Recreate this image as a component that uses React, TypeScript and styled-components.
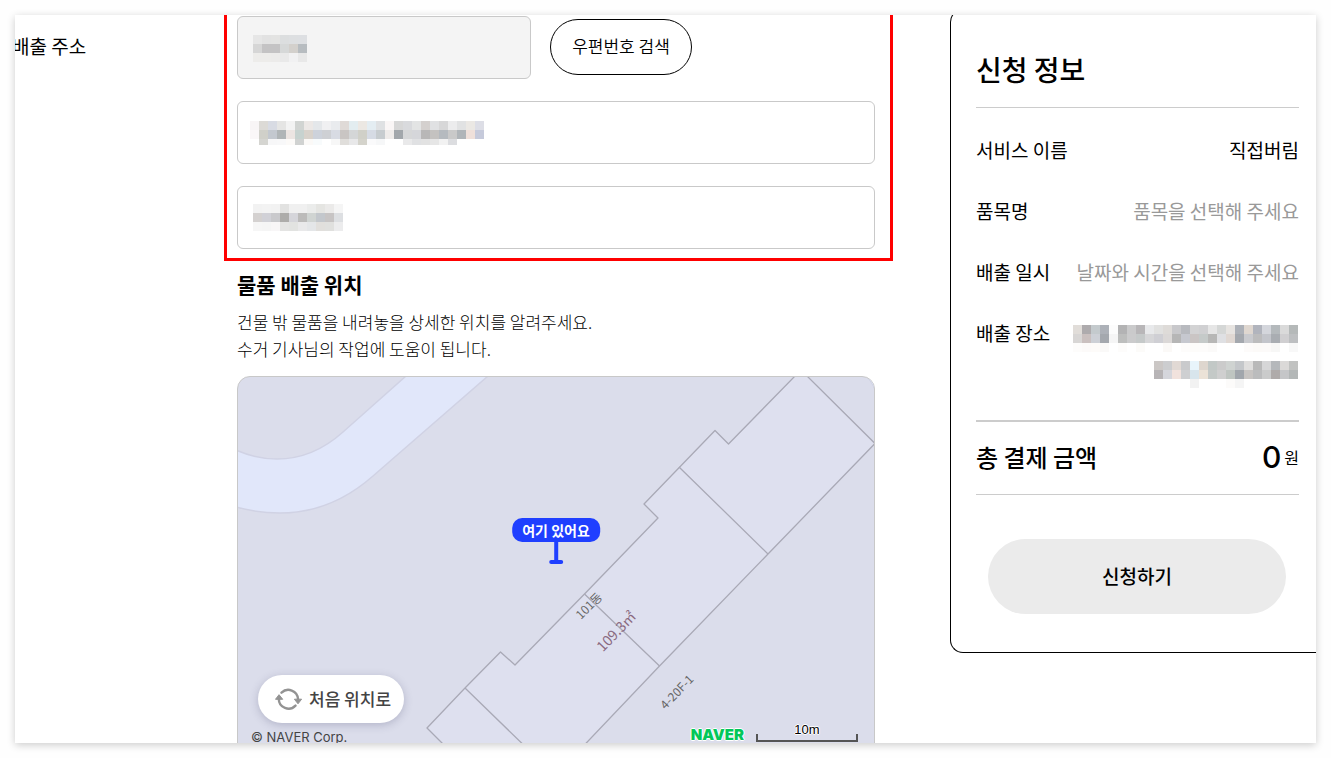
import React from "react";
import styled, { createGlobalStyle } from "styled-components";

const GlobalStyle = createGlobalStyle`
  *, *::before, *::after { box-sizing: border-box; }
  body {
    margin: 0;
    background: #fefefe;
    color: #000;
    font-family: "Noto Sans CJK KR", "Noto Sans", sans-serif;
    font-size: 19px;
    line-height: 28px;
  }
  h2, h3, p, dl, dt, dd { margin: 0; }
  button, input { font-family: inherit; color: inherit; }
`;

const Page = styled.div`
  height: 100vh;
  padding: 15px;
`;

const Sheet = styled.main`
  display: grid;
  grid-template-columns: 209px minmax(0, 1fr) 366px;
  column-gap: 57px;
  align-items: start;
  height: 100%;
  overflow: hidden;
  background: #fff;
`;

const Shadow = styled.div`
  height: calc(100vh - 30px);
  box-shadow: 0 2px 8px rgba(0, 0, 0, 0.2);
`;

const FormLabel = styled.label`
  margin: 17px 0 0 -3px;
`;

const FormArea = styled.section`
  margin-left: -57px;
`;

const AddressGroup = styled.div`
  display: flex;
  flex-direction: column;
  gap: 22px;
  padding: 1px 15px 9px 10px;
  border: solid #ff0000;
  border-width: 0 3px 3px;
`;

const ZipRow = styled.div`
  display: flex;
  align-items: flex-start;
  gap: 19px;
`;

const Field = styled.div<{ $width?: string }>`
  position: relative;
  width: ${(p) => p.$width ?? "100%"};
  height: 63px;
`;

const TextInput = styled.input`
  width: 100%;
  height: 100%;
  padding: 0 15px;
  border: 1px solid #c9c9c9;
  border-radius: 6px;
  background: #fff;
  font-size: 17px;

  &:read-only {
    background: #f4f4f4;
  }
`;

const FieldMask = styled.div<{ $left: number; $top: number }>`
  position: absolute;
  left: ${(p) => p.$left}px;
  top: ${(p) => p.$top}px;
  display: flex;
  pointer-events: none;
`;

const ZipButton = styled.button`
  width: 142px;
  height: 56px;
  margin-top: 3px;
  padding: 0 0 3px;
  border: 1px solid #000;
  border-radius: 28px;
  background: #fff;
  font-size: 17px;
  font-weight: 350;
`;

const LocationBlock = styled.div`
  padding: 7px 18px 0 13px;
`;

const LocationTitle = styled.h3`
  font-size: 21px;
  font-weight: 700;
  line-height: 32px;
`;

const LocationText = styled.p`
  margin: 8px 0 14px;
  font-size: 17px;
  font-weight: 300;
  line-height: 27px;
`;

const MapBox = styled.div`
  position: relative;
  height: 380px;
  overflow: hidden;
  border: 1px solid #c8c8c8;
  border-radius: 13px;
  background: #dbddeb;
`;

const MapDrawing = styled.svg`
  display: block;
  width: 100%;
  height: 100%;
`;

const Pin = styled.div`
  position: absolute;
  left: 50%;
  top: 141px;
  display: flex;
  flex-direction: column;
  align-items: center;
  transform: translateX(-50%);
`;

const PinLabel = styled.span`
  padding: 0 10px;
  border-radius: 10px;
  background: #1f3fff;
  color: #fff;
  font-size: 14px;
  font-weight: 700;
  line-height: 24px;
  white-space: nowrap;
`;

const PinStem = styled.span`
  width: 4px;
  height: 18px;
  background: #1f3fff;
`;

const PinFoot = styled.span`
  width: 14px;
  height: 4px;
  border-radius: 2px;
  background: #1f3fff;
`;

const ResetButton = styled.button`
  position: absolute;
  left: 20px;
  top: 298px;
  display: flex;
  align-items: center;
  gap: 7px;
  height: 48px;
  padding: 0 13px 1px 17px;
  border: 0;
  border-radius: 24px;
  background: #fff;
  box-shadow: 0 2px 8px rgba(60, 60, 100, 0.25);
  color: #444;
  font-size: 17px;
  font-weight: 500;
`;

const Copyright = styled.span`
  position: absolute;
  left: 13px;
  top: 350px;
  color: #444;
  font-family: Inter, sans-serif;
  font-size: 13px;
  line-height: 20px;
`;

const MapLegend = styled.div`
  position: absolute;
  right: 16px;
  top: 346px;
  display: flex;
  align-items: flex-end;
  gap: 12px;
`;

const NaverMark = styled.span`
  color: #03c75a;
  font-family: Inter, sans-serif;
  font-size: 15px;
  font-weight: 900;
  line-height: 14px;
  text-shadow: 1px 0 #fff, -1px 0 #fff, 0 1px #fff, 0 -1px #fff;
`;

const MapScale = styled.span`
  width: 102px;
  color: #000;
  font-family: "Liberation Sans", sans-serif;
  font-size: 13px;
  line-height: 14px;
  text-align: center;
  text-shadow: 1px 0 #fff, -1px 0 #fff, 0 1px #fff, 0 -1px #fff;

  &::after {
    content: "";
    display: block;
    height: 8px;
    margin-top: -3px;
    border: 2px solid #555;
    border-top: 0;
  }
`;

const Summary = styled.aside`
  margin-top: -6px;
  padding: 42px 17px 38px 25px;
  border: solid #000;
  border-width: 1px 0 1px 1px;
  border-radius: 13px 0 0 13px;
`;

const SummaryTitle = styled.h2`
  padding-bottom: 21px;
  border-bottom: 1px solid #ccc;
  font-size: 28px;
  font-weight: 500;
  line-height: 34px;
`;

const SummaryList = styled.dl`
  display: flex;
  flex-direction: column;
  gap: 33px;
  padding: 28px 0 32px;
  border-bottom: 2px solid #ccc;
`;

const SummaryRow = styled.div`
  display: flex;
  justify-content: space-between;
`;

const Term = styled.dt`
  font-weight: 400;
`;

const Value = styled.dd<{ $muted?: boolean }>`
  color: ${(p) => (p.$muted ? "#999" : "#000")};
  font-weight: 400;
`;

const MaskedValue = styled.dd`
  display: flex;
  flex-direction: column;
  align-items: flex-end;
  gap: 9px;
  padding: 6px 1px 0 0;
`;

const TotalRow = styled.div`
  display: flex;
  align-items: center;
  justify-content: space-between;
  height: 73px;
  padding-bottom: 2px;
  border-bottom: 1px solid #ccc;
  font-size: 24px;
  font-weight: 500;
`;

const Amount = styled.span`
  display: flex;
  align-items: center;
  gap: 3px;
`;

const AmountNumber = styled.strong`
  font-family: Inter, sans-serif;
  font-size: 30px;
  font-weight: 500;
`;

const AmountUnit = styled.span`
  font-size: 16px;
  font-weight: 400;
`;

const SubmitButton = styled.button`
  display: block;
  width: calc(100% - 25px);
  height: 75px;
  margin: 44px 13px 0 12px;
  padding: 0 0 3px;
  border: 0;
  border-radius: 38px;
  background: #ebebeb;
  font-size: 19px;
  font-weight: 500;
`;

const CELL = 9;

// Each row is a list of hex colours; "-" leaves the cell empty.
function Mosaic({ rows, lastRow = CELL }: { rows: string[]; lastRow?: number }) {
  const grid = rows.map((row) => row.split(" "));
  const width = grid[0].length * CELL;
  const height = (rows.length - 1) * CELL + lastRow;
  return (
    <svg width={width} height={height} shapeRendering="crispEdges" aria-hidden="true">
      {grid.map((cells, y) =>
        cells.map((c, x) =>
          c === "-" ? null : (
            <rect key={`${x}-${y}`} x={x * CELL} y={y * CELL} width={CELL} height={CELL} fill={`#${c}`} />
          )
        )
      )}
    </svg>
  );
}

const zipMask = [
  "e6e6e6 e2e2e2 e3e3e2 dcdedf dddfe1 dddfe2",
  "d6d6d6 c4c3c4 c4c3c4 d6d8d8 d3d0cc b7bcc0",
  "edecea edecea ecebea e9e9e9 f1f1f2 e8e8e8",
];

const streetMask = [
  "f8f5f6 dcdad6 d8dbe3 e5e5e4 f3f3f3 d1d4d2 ece8e6 e4e7ea f0f0f2 e9ebee dfdad7 e3edf0 ece8e3 e4edf2 dfe1e3 faf6f6 d7d7d7 d9dadd e3e4e4 d4d0ce e0e1e3 d7d7d8 ececed e1e2e3 ebe8e4 dddee6",
  "faf7f8 d0d0c9 c3c8cf b0b5b7 ece5e2 c7d2cf d8d2cb cdd2db ced0d4 d8dbe3 c9c5c3 d4d6d7 d0d0c8 d6dbe4 c7cccf efecea a2a7ab d6d7d8 d5d6da b8b7b7 c4c2c0 b5babf c9c9c9 b0b5b9 efe0da c6cadb",
  "- d5d5d1 f7f7f8 f8f8f9 fcfaf8 d0d2d1 fbf9f7 f8fbfc - f7f7f7 e0dedb e8e8e9 d4d3cb fafafb f6f7f8 - - e9e9ea e0e1e3 e2e2e2 e6e6e6 f2f2f2 dcdde0 - - -",
];

const detailMask = [
  "f2f2f2 f3f3f3 f2f2f2 e2e2e1 f0f0f0 f0f0f0 ebeceb e5e5e2 ebeae9 f5f5f5",
  "d4d1d0 d1d1d7 c9c9cc adacaa d5d5da bcbbba d0d4d2 c3c7cc c7c4c4 dddfe2",
  "f6f6f6 f5f5f5 f8f6f7 e4e4e3 e2e3e1 e9e9ea e4e6e8 e1dfdc e0e0de ececed",
];

const placeMaskTop = [
  "e1ddd9 aeabad c4cacd adb1b8 fcfcfc b3b3b4 cacacb b8b6b8 e8e9eb e1e1e0 dedbd8 c8c8cb b8babf d3d3d4 d0d0d2 e6e6e6 d5d7d6 e7e4e1 adb1b8 dfd7d0 b1b4bd d4d6dc b4b9bc dadada b5b9b9",
  "d8d6d5 cac0bf cdd0d6 a4a8ae f5f5f5 bdbebd cbcbcc c5c9c9 d6d6d8 cfcfd4 dbd8d7 b6b6b6 c6c8cf cac5c4 c5cac9 b7b7b6 dfe0e3 e0d8d3 a4a8ae c9cace bcbcbd c3c5cb a9adb2 d0cfd1 bdbfc1",
  "fdfcfb fcfaf9 fdfbf9 faf9f8 - fdfcfb - fcfbf9 - - fbf9f7 - fdfcfb fdfcfa fdfcfb fbfaf9 - - - fdfbfa fcfaf8 fcfaf9 f7f7f6 - f8f8f8",
];

const placeMaskBottom = [
  "cbc7c5 cccdcf e1d9d4 c9cacc e8f4fb ded6ce c2c8c6 cbcbcb cfd3d1 c4c7ca dfdedd b9b9b9 d6d6d7 b5b8bb dbd9d8 c1c2c1",
  "b7b4b6 d5d6dc f1e2dd cecfd1 d8e5ec ebe2d7 c4c9c7 cfcfcf bfc5c1 a1a6ac c7c4c2 bbbcbd cacbcb afabaa c5c6c8 b3b7b7",
  "- - - - f2f2f2 - - - fcfbfa f5f5f5 - - - - - -",
];

function ResetIcon() {
  return (
    <svg width="27" height="24" viewBox="0 0 27 24" fill="none" aria-hidden="true">
      <path d="M6.5 5.7A9.7 9.7 0 0 1 23 12" stroke="#939393" strokeWidth="2.4" strokeLinecap="round" />
      <path d="M20.5 18.6A9.7 9.7 0 0 1 3.8 12" stroke="#939393" strokeWidth="2.4" strokeLinecap="round" />
      <path d="M19.4 12.2h7.2L23 16.8z" fill="#939393" stroke="#939393" strokeLinejoin="round" />
      <path d="M0.5 12.3h7.2L4 7.7z" fill="#939393" stroke="#939393" strokeLinejoin="round" />
    </svg>
  );
}

function LocationMap() {
  return (
    <MapBox>
      <MapDrawing viewBox="0 0 636 378" preserveAspectRatio="xMidYMin slice" role="img" aria-label="지도">
        <path
          d="M168-1L105 55Q75 82 39 82Q18 82-2 73V130Q20 136 42 136Q93 136 135 99L250-1Z"
          fill="#e1e7fa"
          stroke="#d0d2e4"
          strokeWidth="1.5"
        />
        <path d="M628-2Q634 6 638 14V-2Z" fill="#e1e7fa" stroke="#d0d2e4" />
        <g stroke="#a9a9b6" strokeWidth="1.3" strokeLinejoin="round">
          <path
            d="M558-2L490.500 67L477 53.500L406 127L420 141L346.500 217L277 288L262.500 275L227 311L189 351L219 381H334L421.500 289L530 177L637 66.500L568-2Z"
            fill="#dee0ef"
          />
          <path d="M441 90L530 177M346.500 217L421.500 289M227 311L298 380" fill="none" />
        </g>
        <g
          textAnchor="middle"
          fontFamily="'Noto Sans CJK KR', sans-serif"
          fontSize="12"
          fill="#666"
        >
          <text transform="translate(354 232) rotate(-45)">101동</text>
          <text transform="translate(382 258) rotate(-46)" fontSize="14" fill="#8a6a80">
            109.3㎡
          </text>
          <text transform="translate(442 318) rotate(-46)">4-20F-1</text>
        </g>
      </MapDrawing>
      <Pin>
        <PinLabel>여기 있어요</PinLabel>
        <PinStem />
        <PinFoot />
      </Pin>
      <ResetButton type="button">
        <ResetIcon />
        처음 위치로
      </ResetButton>
      <Copyright>© NAVER Corp.</Copyright>
      <MapLegend>
        <NaverMark>NAVER</NaverMark>
        <MapScale>10m</MapScale>
      </MapLegend>
    </MapBox>
  );
}

export default function App() {
  return (
    <Page>
      <GlobalStyle />
      <Shadow>
        <Sheet>
          <FormLabel htmlFor="zip">배출 주소</FormLabel>
          <FormArea>
            <AddressGroup>
              <ZipRow>
                <Field $width="294px">
                  <TextInput id="zip" readOnly />
                  <FieldMask $left={16} $top={19}>
                    <Mosaic rows={zipMask} />
                  </FieldMask>
                </Field>
                <ZipButton type="button">우편번호 검색</ZipButton>
              </ZipRow>
              <Field>
                <TextInput aria-label="주소" />
                <FieldMask $left={13} $top={20}>
                  <Mosaic rows={streetMask} lastRow={6} />
                </FieldMask>
              </Field>
              <Field>
                <TextInput aria-label="상세 주소" />
                <FieldMask $left={16} $top={18}>
                  <Mosaic rows={detailMask} />
                </FieldMask>
              </Field>
            </AddressGroup>
            <LocationBlock>
              <LocationTitle>물품 배출 위치</LocationTitle>
              <LocationText>
                건물 밖 물품을 내려놓을 상세한 위치를 알려주세요.
                <br />
                수거 기사님의 작업에 도움이 됩니다.
              </LocationText>
              <LocationMap />
            </LocationBlock>
          </FormArea>
          <Summary>
            <SummaryTitle>신청 정보</SummaryTitle>
            <SummaryList>
              <SummaryRow>
                <Term>서비스 이름</Term>
                <Value>직접버림</Value>
              </SummaryRow>
              <SummaryRow>
                <Term>품목명</Term>
                <Value $muted>품목을 선택해 주세요</Value>
              </SummaryRow>
              <SummaryRow>
                <Term>배출 일시</Term>
                <Value $muted>날짜와 시간을 선택해 주세요</Value>
              </SummaryRow>
              <SummaryRow>
                <Term>배출 장소</Term>
                <MaskedValue>
                  <Mosaic rows={placeMaskTop} />
                  <Mosaic rows={placeMaskBottom} />
                </MaskedValue>
              </SummaryRow>
            </SummaryList>
            <TotalRow>
              <span>총 결제 금액</span>
              <Amount>
                <AmountNumber>0</AmountNumber>
                <AmountUnit>원</AmountUnit>
              </Amount>
            </TotalRow>
            <SubmitButton type="button">신청하기</SubmitButton>
          </Summary>
        </Sheet>
      </Shadow>
    </Page>
  );
}
